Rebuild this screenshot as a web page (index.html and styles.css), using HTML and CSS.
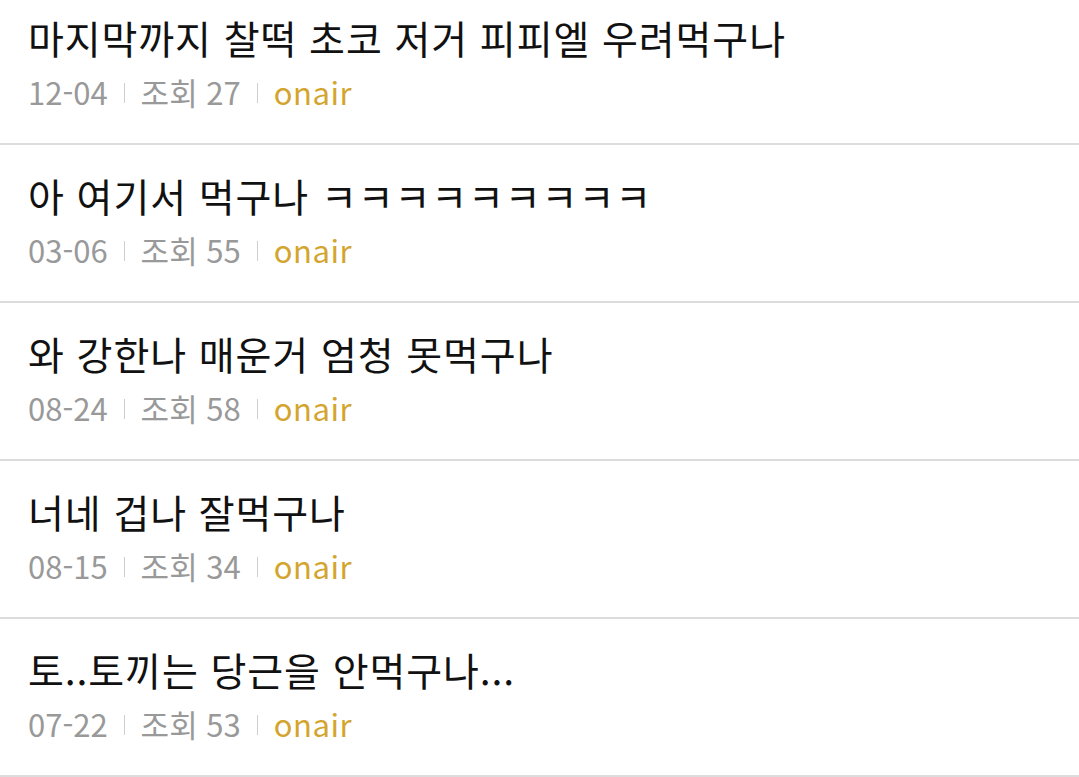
FILE: index.html
```html
<!DOCTYPE html>
<html lang="ko">
<head>
<meta charset="utf-8">
<link rel="stylesheet" href="styles.css">
</head>
<body>
<ul class="list">
  <li class="item">
    <div class="title">마지막까지 찰떡 초코 저거 피피엘 우려먹구나</div>
    <div class="meta"><span>12-04</span><span class="sep"></span><span>조회 27</span><span class="sep"></span><span class="author">onair</span></div>
  </li>
  <li class="item">
    <div class="title">아 여기서 먹구나 ㅋㅋㅋㅋㅋㅋㅋㅋㅋ</div>
    <div class="meta"><span>03-06</span><span class="sep"></span><span>조회 55</span><span class="sep"></span><span class="author">onair</span></div>
  </li>
  <li class="item">
    <div class="title">와 강한나 매운거 엄청 못먹구나</div>
    <div class="meta"><span>08-24</span><span class="sep"></span><span>조회 58</span><span class="sep"></span><span class="author">onair</span></div>
  </li>
  <li class="item">
    <div class="title">너네 겁나 잘먹구나</div>
    <div class="meta"><span>08-15</span><span class="sep"></span><span>조회 34</span><span class="sep"></span><span class="author">onair</span></div>
  </li>
  <li class="item">
    <div class="title">토..토끼는 당근을 안먹구나...</div>
    <div class="meta"><span>07-22</span><span class="sep"></span><span>조회 53</span><span class="sep"></span><span class="author">onair</span></div>
  </li>
</ul>
</body>
</html>
```
FILE: styles.css
```css
html, body {
  margin: 0;
  padding: 0;
  background: #ffffff;
}
body {
  font-family: "Noto Sans CJK KR", "Noto Sans", sans-serif;
  overflow: hidden;
}
.list {
  list-style: none;
  margin: -13px 0 0 0;
  padding: 0;
}
.item {
  height: 158px;
  box-sizing: border-box;
  padding: 25px 0 0 28px;
  border-bottom: 2px solid #dcdcdc;
}
.title {
  font-size: 39px;
  line-height: 50px;
  letter-spacing: 0.9px;
  color: #111111;
  white-space: nowrap;
}
.meta {
  display: flex;
  align-items: center;
  margin-top: 8px;
  font-size: 31px;
  line-height: 44px;
  color: #999999;
}
.sep {
  width: 1px;
  height: 20px;
  background: #cfcfcf;
  margin: 2px 16px 0;
}
.author {
  color: #d3a52e;
  letter-spacing: 0.5px;
}
```
